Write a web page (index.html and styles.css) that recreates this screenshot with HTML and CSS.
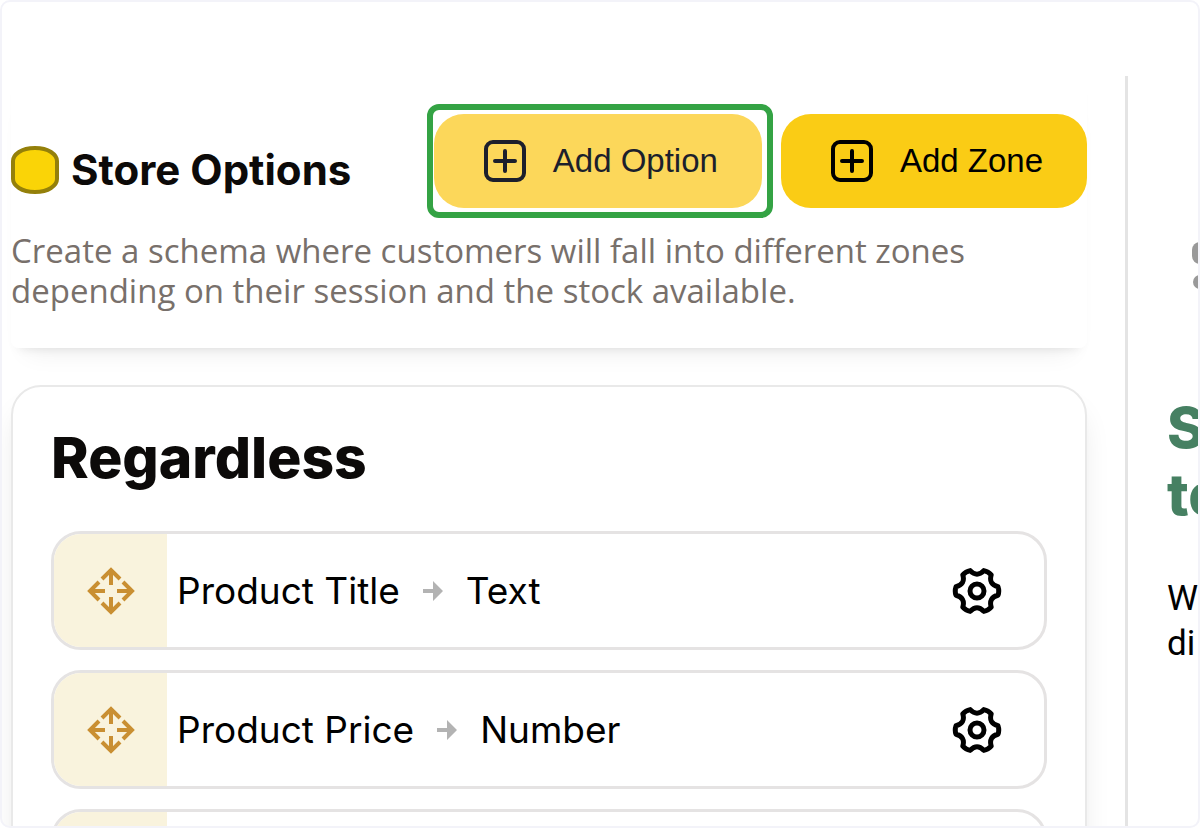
FILE: index.html
```
<!DOCTYPE html>
<html lang="en">
<head>
    <meta charset="UTF-8">
    <meta name="viewport" content="width=device-width, initial-scale=1.0">
    <title>Store Options</title>
    <link rel="stylesheet" href="styles.css">
</head>
<body>
    <!-- shared icons -->
    <svg class="sprite" aria-hidden="true">
        <symbol id="icon-plus" viewBox="0 0 44 44">
            <rect x="3" y="3" width="38" height="38" rx="7"/>
            <path d="M22 12v20M12 22h20"/>
        </symbol>
        <symbol id="icon-move" viewBox="0 0 48 48">
            <path d="M24 3v15M15 12l9-9 9 9M24 45V30M15 36l9 9 9-9M3 24h15M12 15l-9 9 9 9M45 24H30M36 15l9 9-9 9"/>
        </symbol>
        <symbol id="icon-gear" viewBox="-25 -25 50 50">
            <path d="M21-4.3Q22.5 0 21 4.3Q11.4 6.6 14.2 16.2Q11.3 19.5 6.8 20.4Q0 13.2-6.8 20.4Q-11.3 19.5-14.2 16.2Q-11.4 6.6-21 4.3Q-22.5 0-21-4.3Q-11.4-6.6-14.2-16.2Q-11.3-19.5-6.8-20.4Q0-13.2 6.8-20.4Q11.3-19.5 14.2-16.2Q11.4-6.6 21-4.3Z"/>
            <circle r="7"/>
        </symbol>
        <symbol id="icon-arrow" viewBox="0 0 20 20">
            <path d="M0 8h10V0l10 10-10 10v-8H0z"/>
        </symbol>
    </svg>

    <div class="wrapper">
        <main class="panel">
            <header class="panel-header">
                <div class="header-top">
                    <div class="title">
                        <svg class="title-icon" viewBox="0 0 48 48" aria-hidden="true">
                            <path d="M2 15Q2 10 8 6Q14 2 24 2Q34 2 40 6Q46 10 46 15V33Q46 38 40 42Q34 46 24 46Q14 46 8 42Q2 38 2 33Z"/>
                        </svg>
                        <h1>Store Options</h1>
                    </div>
                    <div class="actions">
                        <button type="button" class="btn btn-highlight">
                            <svg class="btn-icon" aria-hidden="true"><use href="#icon-plus"/></svg>
                            Add Option
                        </button>
                        <button type="button" class="btn">
                            <svg class="btn-icon" aria-hidden="true"><use href="#icon-plus"/></svg>
                            Add Zone
                        </button>
                    </div>
                </div>
                <p class="description">Create a schema where customers will fall into different zones<br>depending on their session and the stock available.</p>
            </header>

            <section class="zone">
                <h2>Regardless</h2>
                <ul class="options">
                    <li class="option">
                        <button type="button" class="handle" aria-label="Move"><svg><use href="#icon-move"/></svg></button>
                        <div class="option-text">
                            <span>Product Title</span>
                            <svg class="arrow" aria-hidden="true"><use href="#icon-arrow"/></svg>
                            <span>Text</span>
                        </div>
                        <button type="button" class="settings" aria-label="Settings"><svg><use href="#icon-gear"/></svg></button>
                    </li>
                    <li class="option">
                        <button type="button" class="handle" aria-label="Move"><svg><use href="#icon-move"/></svg></button>
                        <div class="option-text">
                            <span>Product Price</span>
                            <svg class="arrow" aria-hidden="true"><use href="#icon-arrow"/></svg>
                            <span>Number</span>
                        </div>
                        <button type="button" class="settings" aria-label="Settings"><svg><use href="#icon-gear"/></svg></button>
                    </li>
                    <li class="option">
                        <button type="button" class="handle" aria-label="Move"><svg><use href="#icon-move"/></svg></button>
                        <div class="option-text"></div>
                        <button type="button" class="settings" aria-label="Settings"><svg><use href="#icon-gear"/></svg></button>
                    </li>
                </ul>
            </section>
        </main>

        <aside class="sidebar">
            <svg class="sidebar-icon" viewBox="0 0 40 48" aria-hidden="true">
                <rect width="40" height="22" rx="8"/>
                <circle cx="8" cy="40" r="7"/>
            </svg>
            <h2>S<br>te</h2>
            <p>W<br>di</p>
        </aside>
    </div>
</body>
</html>
```
FILE: styles.css
```
* {
    margin: 0;
    padding: 0;
    box-sizing: border-box;
}

body {
    font-family: Inter, "Liberation Sans", sans-serif;
    background: #fff;
    color: #0c0a09;
}

button {
    border: none;
    background: none;
    cursor: pointer;
}

.sprite {
    position: absolute;
    width: 0;
    height: 0;
}

.wrapper {
    display: flex;
    height: 100vh;
    padding-top: 74px;
    border: 2px solid #f3f3f9;
    border-radius: 10px;
    overflow: hidden;
}

.panel {
    flex: 1;
    min-width: 0;
    padding: 0 38px 0 9px;
}

/* header */
.panel-header {
    padding: 38px 0 37px;
    border-radius: 8px;
    box-shadow: 0 20px 24px -16px rgba(0, 0, 0, 0.07), 0 8px 10px -8px rgba(0, 0, 0, 0.1);
}

.header-top {
    display: flex;
    justify-content: space-between;
    align-items: center;
    margin-bottom: 23px;
}

.title {
    display: flex;
    align-items: center;
    gap: 12px;
    padding-top: 18px;
}

.title-icon {
    width: 48px;
    height: 48px;
    fill: #fad407;
    stroke: #94800a;
    stroke-width: 4;
}

.title h1 {
    font-size: 42px;
    line-height: 48px;
    font-weight: 700;
    white-space: nowrap;
}

.actions {
    display: flex;
    gap: 19px;
}

.btn {
    position: relative;
    display: flex;
    align-items: center;
    gap: 26px;
    height: 94px;
    padding: 0 44px 0 49px;
    border-radius: 30px;
    background-color: #facc15;
    color: #000;
    font-family: "Liberation Sans", sans-serif;
    font-size: 33px;
    white-space: nowrap;
}

.btn-highlight {
    background-color: #fcd75a;
    color: #1c1f2c;
}

.btn-highlight::after {
    content: "";
    position: absolute;
    inset: -10px -11px -10px -7px;
    border: 6px solid #34a344;
    border-radius: 12px;
}

.btn-icon {
    width: 44px;
    height: 44px;
    fill: none;
    stroke: currentColor;
    stroke-width: 4;
    stroke-linecap: round;
}

.description {
    font-family: "Open Sans", sans-serif;
    font-size: 33px;
    line-height: 40px;
    color: #78706b;
}

/* zone card */
.zone {
    margin-top: 37px;
    padding: 38px;
    border: 2px solid #e9e9e9;
    border-radius: 30px;
    background-color: #fff;
    box-shadow: 0 20px 30px -6px rgba(0, 0, 0, 0.1), 0 8px 12px -8px rgba(0, 0, 0, 0.1);
}

.zone h2 {
    margin-bottom: 40px;
    font-size: 57px;
    line-height: 66px;
    font-weight: 800;
}

.options {
    display: flex;
    flex-direction: column;
    gap: 20px;
    list-style: none;
}

.option {
    display: flex;
    height: 119px;
    border: 3px solid #e5e3e3;
    border-radius: 30px;
    overflow: hidden;
}

.handle {
    display: flex;
    justify-content: center;
    align-items: center;
    width: 113px;
    background-color: #f9f3dd;
}

.handle svg {
    width: 48px;
    height: 48px;
    fill: none;
    stroke: #c98f32;
    stroke-width: 4;
}

.option-text {
    flex: 1;
    display: flex;
    align-items: center;
    gap: 23px;
    padding-left: 10px;
    font-size: 37px;
    color: #000;
}

.arrow {
    width: 20px;
    height: 20px;
    fill: #b3b3b3;
}

.settings {
    padding: 0 42px;
}

.settings svg {
    display: block;
    width: 50px;
    height: 50px;
    fill: none;
    stroke: #000;
    stroke-width: 5;
    stroke-linejoin: round;
}

/* sidebar */
.sidebar {
    width: 73px;
    padding: 166px 0 0 39px;
    border-left: 3px solid #e4e4e4;
    overflow: hidden;
    white-space: nowrap;
}

.sidebar-icon {
    display: block;
    width: 40px;
    height: 48px;
    margin: 0 0 104px 25px;
    fill: #999;
}

.sidebar h2 {
    margin-bottom: 48px;
    font-size: 57px;
    line-height: 67px;
    font-weight: 800;
    color: #468062;
}

.sidebar p {
    font-family: Roboto, sans-serif;
    font-size: 35px;
    line-height: 45px;
    color: #000;
}
```
